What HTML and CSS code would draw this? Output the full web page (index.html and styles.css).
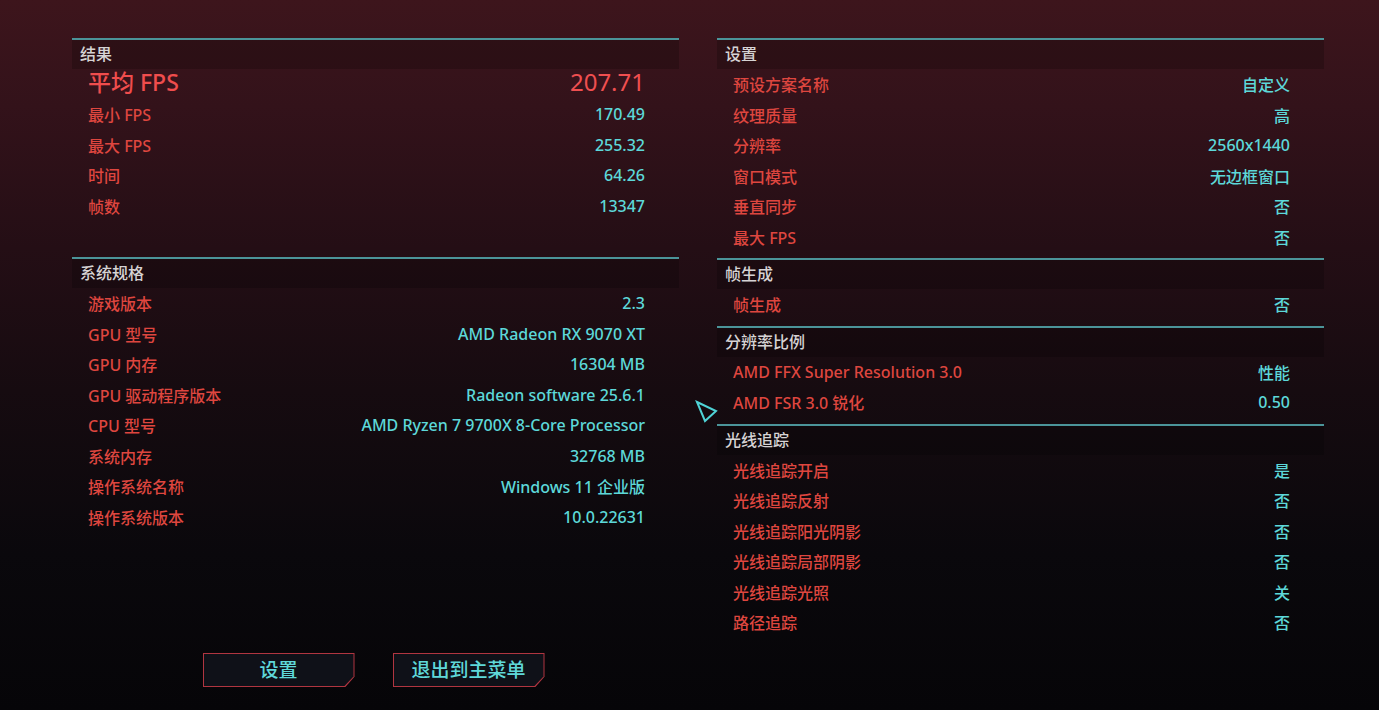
FILE: index.html
```html
<!DOCTYPE html>
<html lang="zh-CN">
<head>
<meta charset="utf-8">
<title>基准测试结果</title>
<link rel="stylesheet" href="styles.css">
</head>
<body>
<div class="page">
  <div class="col left">
    <section class="sec sec-results">
      <div class="sec-head">结果</div>
      <div class="row big"><span class="lbl">平均 FPS</span><span class="val">207.71</span></div>
      <div class="row"><span class="lbl">最小 FPS</span><span class="val">170.49</span></div>
      <div class="row"><span class="lbl">最大 FPS</span><span class="val">255.32</span></div>
      <div class="row"><span class="lbl">时间</span><span class="val">64.26</span></div>
      <div class="row"><span class="lbl">帧数</span><span class="val">13347</span></div>
    </section>
    <section class="sec">
      <div class="sec-head">系统规格</div>
      <div class="row"><span class="lbl">游戏版本</span><span class="val">2.3</span></div>
      <div class="row"><span class="lbl">GPU 型号</span><span class="val">AMD Radeon RX 9070 XT</span></div>
      <div class="row"><span class="lbl">GPU 内存</span><span class="val">16304 MB</span></div>
      <div class="row"><span class="lbl">GPU 驱动程序版本</span><span class="val">Radeon software 25.6.1</span></div>
      <div class="row"><span class="lbl">CPU 型号</span><span class="val">AMD Ryzen 7 9700X 8-Core Processor</span></div>
      <div class="row"><span class="lbl">系统内存</span><span class="val">32768 MB</span></div>
      <div class="row"><span class="lbl">操作系统名称</span><span class="val">Windows 11 企业版</span></div>
      <div class="row"><span class="lbl">操作系统版本</span><span class="val">10.0.22631</span></div>
    </section>
    <div class="buttons">
      <button class="btn"><span>设置</span></button>
      <button class="btn"><span>退出到主菜单</span></button>
    </div>
  </div>
  <div class="col right">
    <section class="sec">
      <div class="sec-head">设置</div>
      <div class="row"><span class="lbl">预设方案名称</span><span class="val">自定义</span></div>
      <div class="row"><span class="lbl">纹理质量</span><span class="val">高</span></div>
      <div class="row"><span class="lbl">分辨率</span><span class="val">2560x1440</span></div>
      <div class="row"><span class="lbl">窗口模式</span><span class="val">无边框窗口</span></div>
      <div class="row"><span class="lbl">垂直同步</span><span class="val">否</span></div>
      <div class="row"><span class="lbl">最大 FPS</span><span class="val">否</span></div>
    </section>
    <section class="sec">
      <div class="sec-head">帧生成</div>
      <div class="row"><span class="lbl">帧生成</span><span class="val">否</span></div>
    </section>
    <section class="sec">
      <div class="sec-head">分辨率比例</div>
      <div class="row"><span class="lbl">AMD FFX Super Resolution 3.0</span><span class="val">性能</span></div>
      <div class="row"><span class="lbl">AMD FSR 3.0 锐化</span><span class="val">0.50</span></div>
    </section>
    <section class="sec">
      <div class="sec-head">光线追踪</div>
      <div class="row"><span class="lbl">光线追踪开启</span><span class="val">是</span></div>
      <div class="row"><span class="lbl">光线追踪反射</span><span class="val">否</span></div>
      <div class="row"><span class="lbl">光线追踪阳光阴影</span><span class="val">否</span></div>
      <div class="row"><span class="lbl">光线追踪局部阴影</span><span class="val">否</span></div>
      <div class="row"><span class="lbl">光线追踪光照</span><span class="val">关</span></div>
      <div class="row"><span class="lbl">路径追踪</span><span class="val">否</span></div>
    </section>
  </div>
  <svg class="cursor" width="24" height="26" viewBox="0 0 24 26">
    <path d="M2 2 L21 11 L10 21 Z" fill="none" stroke="#4fd3d6" stroke-width="2" stroke-linejoin="miter"/>
  </svg>
</div>
</body>
</html>
```

FILE: styles.css
```css
html, body {
  margin: 0;
  padding: 0;
}
body {
  width: 1379px;
  height: 710px;
  overflow: hidden;
  background: linear-gradient(180deg, #3d151c 0%, #33121a 15%, #240e15 35%, #160b10 55%, #0a080c 78%, #060508 100%);
  font-family: "Noto Sans", "Noto Sans CJK SC", sans-serif;
  font-weight: 500;
}
.page {
  position: relative;
  display: flex;
  gap: 38px;
  padding: 38px 0 23px 72px;
  height: 710px;
  box-sizing: border-box;
}
.col {
  width: 607px;
  display: flex;
  flex-direction: column;
}
.sec {
  border-top: 2px solid #4b9499;
  margin-bottom: 6px;
}
.sec-results {
  margin-bottom: 36px;
}
.sec-head {
  height: 29px;
  line-height: 29px;
  padding-left: 8px;
  color: #d6d3d4;
  font-size: 16px;
  background: rgba(0, 0, 0, 0.2);
}
.row {
  display: flex;
  justify-content: space-between;
  align-items: center;
  height: 30.5px;
  padding: 0 34px 0 16px;
  font-size: 16px;
}
.lbl {
  color: #de463f;
}
.val {
  color: #5dd8d9;
}
.row.big {
  height: 30px;
  align-items: flex-start;
}
.row.big .lbl {
  font-size: 23px;
  line-height: 30px;
  margin-top: -2px;
  color: #f04d4d;
}
.row.big .val {
  font-size: 24px;
  line-height: 30px;
  margin-top: -2px;
  color: #ef4f50;
  font-weight: 400;
}
.buttons {
  margin-top: auto;
  display: flex;
  justify-content: center;
  gap: 38px;
  padding-right: 4px;
}
.btn {
  position: relative;
  width: 152px;
  height: 34px;
  padding: 0 0 3px;
  border: none;
  background: #b03540;
  clip-path: polygon(0 0, 100% 0, 100% 70%, 94% 100%, 0 100%);
  font-family: "Noto Sans CJK SC", sans-serif;
  font-weight: 500;
  font-size: 19px;
  color: #5fd8d9;
}
.btn::before {
  content: "";
  position: absolute;
  inset: 1px;
  background: #0f1118;
  clip-path: polygon(0 0, 100% 0, 100% 70%, 94% 100%, 0 100%);
}
.btn span {
  position: relative;
}
.cursor {
  position: absolute;
  left: 695px;
  top: 400px;
}
```
